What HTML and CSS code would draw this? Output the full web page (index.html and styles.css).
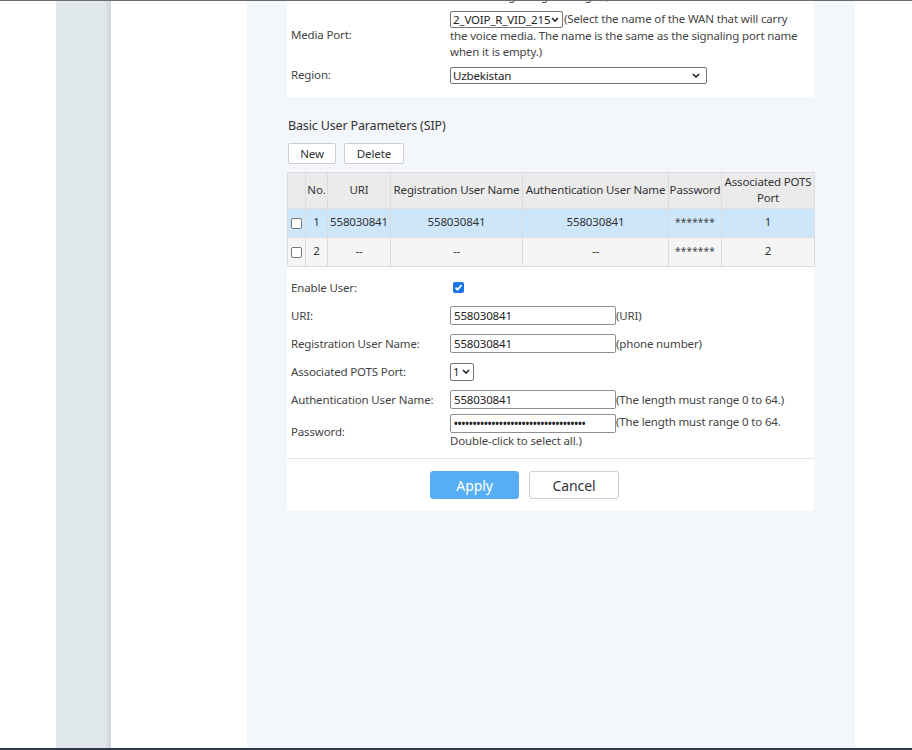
FILE: index.html
```html
<!DOCTYPE html>
<html>
<head>
<meta charset="utf-8">
<link rel="stylesheet" href="styles.css">
</head>
<body>
<div class="topline"></div>
<div class="frame">
  <div class="gutter"></div>
  <div class="sidebar"></div>
  <div class="spacer"></div>
  <div class="main">
    <div class="card card-top">
      <div class="frow">
        <div class="flabel">Signaling Port:</div>
        <div class="fvalue"><span class="sel sel-wan">2_VOIP_R_VID_215<svg class="chev" viewBox="0 0 8 5"><path d="M1 1l3 3 3-3"/></svg></span>(Select the name of the WAN that will carry the voice signaling messages.)</div>
      </div>
      <div class="frow">
        <div class="flabel">Media Port:</div>
        <div class="fvalue"><span class="sel sel-wan">2_VOIP_R_VID_215<svg class="chev" viewBox="0 0 8 5"><path d="M1 1l3 3 3-3"/></svg></span>(Select the name of the WAN that will carry the voice media. The name is the same as the signaling port name when it is empty.)</div>
      </div>
      <div class="frow">
        <div class="flabel">Region:</div>
        <div class="fvalue"><span class="sel sel-region">Uzbekistan<svg class="chev" viewBox="0 0 8 5"><path d="M1 1l3 3 3-3"/></svg></span></div>
      </div>
    </div>

    <div class="section-title">Basic User Parameters (SIP)</div>
    <div class="toolbar">
      <button class="btn btn-small">New</button>
      <button class="btn btn-small btn-del">Delete</button>
    </div>

    <table class="grid">
      <colgroup>
        <col class="c-chk"><col class="c-no"><col class="c-uri"><col class="c-reg"><col class="c-auth"><col class="c-pwd"><col class="c-pots">
      </colgroup>
      <thead>
        <tr><th></th><th>No.</th><th>URI</th><th>Registration User Name</th><th>Authentication User Name</th><th>Password</th><th>Associated POTS Port</th></tr>
      </thead>
      <tbody>
        <tr class="sel-row"><td><span class="cb"></span></td><td>1</td><td>558030841</td><td>558030841</td><td>558030841</td><td class="stars">*******</td><td>1</td></tr>
        <tr class="alt-row"><td><span class="cb"></span></td><td>2</td><td>--</td><td>--</td><td>--</td><td class="stars">*******</td><td>2</td></tr>
      </tbody>
    </table>

    <div class="card card-form">
      <div class="urow">
        <div class="ulabel">Enable User:</div>
        <div class="uvalue"><span class="cb-on"><svg viewBox="0 0 11 11"><path d="M2.5 5.6l2 2 4-4.4"/></svg></span></div>
      </div>
      <div class="urow">
        <div class="ulabel">URI:</div>
        <div class="uvalue"><span class="inp">558030841</span>(URI)</div>
      </div>
      <div class="urow">
        <div class="ulabel">Registration User Name:</div>
        <div class="uvalue"><span class="inp">558030841</span>(phone number)</div>
      </div>
      <div class="urow">
        <div class="ulabel">Associated POTS Port:</div>
        <div class="uvalue"><span class="sel sel-port">1<svg class="chev" viewBox="0 0 8 5"><path d="M1 1l3 3 3-3"/></svg></span></div>
      </div>
      <div class="urow">
        <div class="ulabel">Authentication User Name:</div>
        <div class="uvalue"><span class="inp">558030841</span>(The length must range 0 to 64.)</div>
      </div>
      <div class="urow urow-pwd">
        <div class="ulabel">Password:</div>
        <div class="uvalue wrap"><span class="inp pwd">•••••••••••••••••••••••••••••••••••</span>(The length must range 0 to 64. Double-click to select all.)</div>
      </div>
      <div class="actions">
        <button class="btn btn-apply">Apply</button>
        <button class="btn btn-cancel">Cancel</button>
      </div>
    </div>
  </div>
  <div class="rightpad"></div>
</div>
<div class="bottomline"></div>
</body>
</html>
```

FILE: styles.css
```css
* { box-sizing: border-box; }
html, body { margin: 0; padding: 0; }
body {
  width: 912px;
  height: 750px;
  overflow: hidden;
  background: #fff;
  font-family: "Noto Sans", "Open Sans", sans-serif;
  font-size: 11.5px;
  letter-spacing: -0.15px;
  color: #444;
  display: flex;
  flex-direction: column;
}
.topline { height: 1px; background: #6b6b6b; flex: none; }
.bottomline { height: 2px; background: #2c3b4c; flex: none; }
.frame { flex: 1; display: flex; min-height: 0; }
.gutter { width: 56px; flex: none; }
.sidebar {
  width: 55px; flex: none;
  background: linear-gradient(to right, #e1e8ec 0, #e1e8ec 49px, #d6dde2 52px, #cfd6db 55px);
}
.spacer { width: 136px; flex: none; background: #fff; }
.main {
  width: 608px; flex: none;
  background: #f3f6fa;
  padding: 0 40px 0 40px;
  overflow: hidden;
}
.rightpad { flex: 1; background: #fff; }

.card { background: #fff; width: 527px; }
.card-top { margin-top: -43px; padding: 10px 0 10px; }
.frow { display: flex; align-items: center; padding: 3px 0; line-height: 16.5px; }
.flabel { width: 163px; flex: none; padding-left: 4px; }
.fvalue { width: 350px; flex: none; }

.sel {
  display: inline-flex; align-items: center; justify-content: space-between;
  height: 17px; border: 1px solid #767676; border-radius: 2px;
  background: #fff; color: #222; padding: 0 3px 0 2px;
  vertical-align: top; line-height: 15px;
}
.sel-wan { width: 113px; margin-right: 1px; }
.sel-region { width: 257px; padding-right: 6px; }
.sel-port { width: 24px; height: 18px; }
.chev { width: 8px; height: 5px; fill: none; stroke: #222; stroke-width: 1.6; flex: none; }

.section-title { font-size: 12.5px; color: #333; margin: 20px 0 0 1px; line-height: 18px; }
.toolbar { display: flex; gap: 8px; margin: 8px 0 0 1px; }
.btn {
  font-family: inherit; background: #fff; border: 1px solid #cfcfcf;
  border-radius: 2px; color: #333; cursor: pointer; padding: 0; letter-spacing: -0.1px;
}
.btn-small { height: 21px; width: 48px; font-size: 11.5px; }
.btn-del { width: 60px; }

.grid {
  margin-top: 8px; width: 527px; border-collapse: collapse; table-layout: fixed;
  color: #333;
}
.grid th, .grid td {
  border: 1px solid #dcdcdc; text-align: center; padding: 0; line-height: 16.5px;
  font-weight: normal; overflow: hidden; white-space: nowrap;
}
.grid th { background: #ebebeb; height: 36px; white-space: normal; }
.grid td { height: 29px; }
.c-chk { width: 18px; }
.c-no { width: 22px; }
.c-uri { width: 63px; }
.c-reg { width: 132px; }
.c-auth { width: 146px; }
.c-pwd { width: 53px; }
.c-pots { width: 93px; }
.sel-row td { background: #cde6fa; }
.alt-row td { background: #f5f5f5; }
.stars { font-size: 10px; letter-spacing: 0.2px; color: #444; }
.cb {
  display: inline-block; width: 11px; height: 11px; border: 1px solid #767676;
  border-radius: 2px; background: #fff; vertical-align: middle;
}

.card-form { padding-top: 7px; }
.urow { display: flex; align-items: center; height: 28px; }
.urow-pwd { height: auto; padding-bottom: 9px; border-bottom: 1px solid #e6e6e6; }
.ulabel { width: 163px; flex: none; padding-left: 4px; }
.uvalue { flex: 1; display: flex; align-items: center; }
.uvalue.wrap { display: block; line-height: 16.5px; padding-right: 20px; }
.inp {
  display: inline-block; width: 166px; height: 19px; border: 1px solid #8f8f8f;
  border-radius: 2px; color: #222; padding: 0 3px; line-height: 17px; vertical-align: top;
}
.pwd { font-size: 10px; letter-spacing: 0; overflow: hidden; white-space: nowrap; line-height: 17px; font-weight: bold; }
.cb-on {
  display: inline-block; width: 11px; height: 11px; margin-left: 3px;
  background: #1a73e8; border-radius: 2px;
}
.cb-on svg { width: 11px; height: 11px; display: block; fill: none; stroke: #fff; stroke-width: 1.8; }

.actions { display: flex; gap: 10px; padding: 12px 0 12px 143px; }
.btn-apply {
  width: 89px; height: 28px; background: #58aef4; border-color: #58aef4;
  color: #fff; font-size: 14px; border-radius: 3px;
}
.btn-cancel { width: 90px; height: 28px; font-size: 14px; border-radius: 3px; color: #333; }
```
